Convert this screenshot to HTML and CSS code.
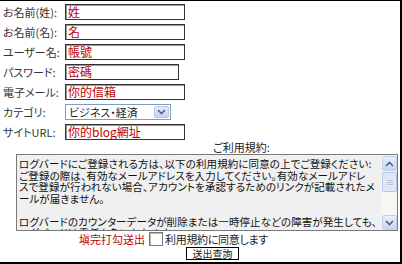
FILE: index.html
```html
<!DOCTYPE html>
<html lang="ja">
<head>
    <meta charset="UTF-8">
    <title>会員登録</title>
    <link rel="stylesheet" href="styles.css">
</head>
<body>
    <div class="signup-box">
        <div class="form-grid">
            <label>お名前(姓):</label>
            <div class="field field-wide">姓</div>

            <label>お名前(名):</label>
            <div class="field field-wide">名</div>

            <label>ユーザー名:</label>
            <div class="field field-wide">帳號</div>

            <label>パスワード:</label>
            <div class="field field-short">密碼</div>

            <label>電子メール:</label>
            <div class="field field-wide">你的信箱</div>

            <label>カテゴリ:</label>
            <div class="select-box">
                <span class="select-text">ビジネス・経済</span>
                <span class="select-arrow">
                    <svg width="9" height="6" viewBox="0 0 9 6"><path d="M1 1 L4.5 4.5 L8 1" fill="none" stroke="#4d6185" stroke-width="1.6"/></svg>
                </span>
            </div>

            <label>サイトURL:</label>
            <div class="field field-wide">你的blog網址</div>
        </div>

        <div class="terms-title">ご利用規約:</div>

        <div class="terms-box">
            <div class="terms-text">
                <div class="terms-line">ログバードにご登録される方は、以下の利用規約に同意の上でご登録ください:</div>
                <div class="terms-line">ご登録の際は、有効なメールアドレスを入力してください。有効なメールアドレ</div>
                <div class="terms-line">スで登録が行われない場合、アカウントを承認するためのリンクが記載されたメ</div>
                <div class="terms-line">ールが届きません。</div>
                <div class="terms-line">&nbsp;</div>
                <div class="terms-line">ログバードのカウンターデータが削除または一時停止などの障害が発生しても、</div>
                <div class="terms-line">ログバードは責任を負いかねます。</div>
            </div>
            <div class="scrollbar">
                <span class="scroll-btn">
                    <svg width="9" height="6" viewBox="0 0 9 6"><path d="M1 5 L4.5 1.5 L8 5" fill="none" stroke="#4d6185" stroke-width="1.6"/></svg>
                </span>
                <span class="scroll-thumb">
                    <svg width="6" height="5" viewBox="0 0 6 5"><path d="M0 0.5 H6 M0 2.5 H6 M0 4.5 H6" stroke="#b7c4dc" stroke-width="1"/></svg>
                </span>
                <span class="scroll-track"></span>
                <span class="scroll-btn">
                    <svg width="9" height="6" viewBox="0 0 9 6"><path d="M1 1 L4.5 4.5 L8 1" fill="none" stroke="#4d6185" stroke-width="1.6"/></svg>
                </span>
            </div>
        </div>

        <div class="agree-row">
            <span class="agree-hint">塡完打勾送出</span>
            <span class="check"></span>
            <span class="agree-label">利用規約に同意します</span>
        </div>

        <div class="submit-row">
            <button class="submit-button">送出查詢</button>
        </div>
    </div>
</body>
</html>
```

FILE: styles.css
```css
* {
    margin: 0;
    padding: 0;
    box-sizing: border-box;
}

body {
    background: #fff;
    font-family: "Noto Sans CJK JP", "Noto Sans", sans-serif;
    font-feature-settings: "palt";
    font-size: 11px;
    line-height: 14px;
    color: #333;
}

.signup-box {
    width: 402px;
    height: 264px;
    border-top: 1px solid #000;
    border-right: 2px solid #000;
    border-bottom: 2px solid #000;
    padding: 3px 0 0 3px;
    overflow: hidden;
}

.form-grid {
    display: grid;
    grid-template-columns: 62px auto;
    grid-auto-rows: 16px;
    row-gap: 4px;
    align-items: center;
    justify-items: start;
}

.form-grid label {
    height: 16px;
    line-height: 16px;
    white-space: nowrap;
}

.field {
    height: 16px;
    border: 1px solid #333;
    box-shadow: inset 1px 1px 0 #999;
    color: #c00000;
    font-size: 12px;
    line-height: 14px;
    padding-left: 2px;
    white-space: nowrap;
    background: #fff;
}

.field-wide {
    width: 120px;
}

.field-short {
    width: 114px;
}

.select-box {
    display: flex;
    align-items: center;
    width: 106px;
    height: 16px;
    border: 1px solid #7f9db9;
    background: #fff;
    color: #222;
    padding: 0 1px;
}

.select-text {
    flex: 1;
    padding-left: 2px;
    line-height: 14px;
}

.select-arrow {
    width: 15px;
    height: 12px;
    display: flex;
    align-items: center;
    justify-content: center;
    background: linear-gradient(#e6ecf8, #c5d3f0);
    border: 1px solid #b5c6e6;
    border-radius: 2px;
}

.terms-title {
    padding-left: 210px;
    margin-top: 1px;
    height: 12px;
    line-height: 12px;
    color: #222;
}

.terms-box {
    display: flex;
    width: 382px;
    height: 77px;
    margin: 1px 0 0 13px;
    border: 1px solid #7a7a7a;
    background: #f0f0f0;
    overflow: hidden;
}

.terms-text {
    flex: 1;
    padding: 3px 0 0 2px;
    color: #111;
    font-size: 10.5px;
    line-height: 11.5px;
    letter-spacing: 0.1px;
    overflow: hidden;
}

.terms-line {
    white-space: nowrap;
}

.scrollbar {
    width: 16px;
    display: flex;
    flex-direction: column;
    background: #f6f6f2;
    padding: 1px 0 0 1px;
}

.scroll-btn {
    width: 15px;
    height: 15px;
    display: flex;
    align-items: center;
    justify-content: center;
    background: linear-gradient(#e9eefb, #c8d5f1);
    border: 1px solid #c3d0ea;
    border-radius: 2px;
}

.scroll-thumb {
    width: 15px;
    height: 20px;
    margin-top: 1px;
    display: flex;
    align-items: center;
    justify-content: center;
    background: #e1e7f5;
    border: 1px solid #b8c6e4;
    border-radius: 2px;
}

.scroll-track {
    flex: 1;
}

.agree-row {
    display: flex;
    align-items: center;
    margin: 1px 0 0 76px;
    height: 14px;
    line-height: 14px;
    color: #222;
}

.agree-hint {
    color: #c00000;
    font-size: 11px;
    margin-right: 4px;
}

.check {
    width: 14px;
    height: 14px;
    border: 1px solid #777;
    box-shadow: inset 1px 1px 0 #bbb;
    background: #fff;
    margin-right: 2px;
}

.agree-label {
    letter-spacing: -0.3px;
}

.submit-row {
    padding-left: 183px;
    margin-top: 1px;
}

.submit-button {
    display: block;
    width: 53px;
    height: 13px;
    border: 1px solid #000;
    background: #fff;
    font-family: "Noto Sans CJK TC", "Noto Sans CJK JP", sans-serif;
    font-size: 10px;
    line-height: 11px;
    color: #222;
}
```
